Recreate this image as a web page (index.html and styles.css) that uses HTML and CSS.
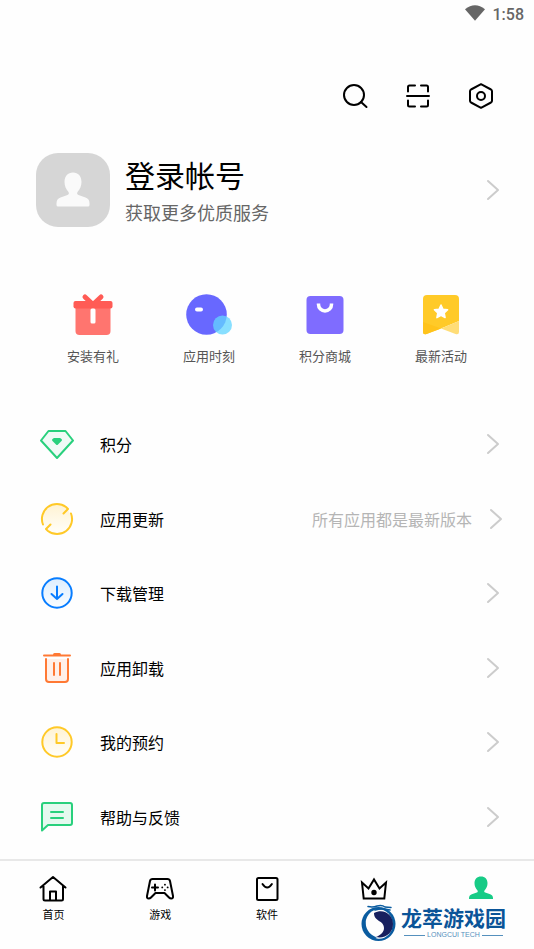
FILE: index.html
```html
<!DOCTYPE html>
<html lang="zh-CN">
<head>
<meta charset="utf-8">
<meta name="viewport" content="width=device-width, initial-scale=1">
<title>我的</title>
<link rel="stylesheet" href="styles.css">
</head>
<body>
<header class="status">
  <svg width="20" height="16" viewBox="0 0 20 16"><path d="M0 4.2Q10-3.8 20 4.2L10 15.8Z" fill="#666"/></svg>
  <time>1:58</time>
</header>
<div class="actions">
  <button type="button" aria-label="搜索"><svg class="line" width="26" height="26" viewBox="0 0 26 26"><circle cx="12" cy="12" r="10"/><path d="M19 19l5.500 5"/></svg></button>
  <button type="button" aria-label="扫一扫"><svg class="line" width="26" height="26" viewBox="0 0 26 26"><path d="M2 13h22M3 8.500V4q0-1.500 1.500-1.500H10M16 2.500h5.500Q23 2.500 23 4v4.500M3 17.500V22q0 1.500 1.500 1.500H10M16 23.500h5.500q1.500 0 1.500-1.500v-4.500"/></svg></button>
  <button type="button" aria-label="设置"><svg class="line" width="26" height="26" viewBox="0 0 26 26"><path d="M13 1.200L23 6.500q1 .6 1 1.700v9.600q0 1.100-1 1.700L13 24.800 3 19.500q-1-.6-1-1.700V8.200q0-1.100 1-1.700Z"/><circle cx="13" cy="13" r="4"/></svg></button>
</div>
<main>
  <a class="profile" href="#login">
    <span class="avatar"><svg width="34" height="36" viewBox="0 0 34 36"><path class="person" d="M17 .5c5.200 0 8.500 3.800 8.500 9.500 0 4-1.500 7-4 10-.8 1.200-.3 2.500 1 3l7 2.500c3 1 4 3 4 6V33q0 1.500-1.500 1.500H2Q.5 34.500.5 33v-1.500c0-3 1-5 4-6l7-2.500c1.300-.5 1.800-1.800 1-3-2.500-3-4-6-4-10C8.500 4.300 11.800.5 17 .5Z"/></svg></span>
    <span class="who"><strong>登录帐号</strong><small>获取更多优质服务</small></span>
    <svg class="arrow" width="14" height="22" viewBox="0 0 14 22"><path d="M2 2l10 9-10 9"/></svg>
  </a>
  <nav class="shortcuts" aria-label="快捷入口">
    <a href="#gift"><svg width="48" height="44" viewBox="0 0 48 44"><path fill="#ff756f" d="M6.500 15h35v23q0 4-4 4h-27q-4 0-4-4Z"/><path stroke="#ff5b55" stroke-width="5" stroke-linecap="round" stroke-linejoin="round" fill="none" d="M16 4l8 7.500 8-7.500"/><rect x="4.500" y="8" width="39" height="7.500" rx="2" fill="#ff5b55"/><rect x="21.500" y="15.500" width="5" height="15" rx="1.500" fill="#fff"/></svg>安装有礼</a>
    <a href="#moment"><svg width="48" height="44" viewBox="0 0 48 44"><circle cx="21.500" cy="21.500" r="20.300" fill="#6868ff"/><circle cx="37.500" cy="32" r="9.500" fill="#62d5ff" opacity=".76"/><rect x="10" y="14.500" width="8" height="4" rx="2" fill="#fff"/></svg>应用时刻</a>
    <a href="#mall"><svg width="48" height="44" viewBox="0 0 48 44"><rect x="5.500" y="3" width="37" height="38" rx="4" fill="#7f6cff"/><path d="M17.500 10.500v1a6.500 6.500 0 0 0 13 0v-1" fill="none" stroke="#fff" stroke-width="3.500"/></svg>积分商城</a>
    <a href="#events"><svg width="48" height="44" viewBox="0 0 48 44"><path fill="#ffca28" d="M6 6q0-4 4-4h28q4 0 4 4v22L24 35.500 9.500 41Q6 42 6 39Z"/><path fill="#ffc31b" d="M6 29l18 6.500L9.500 41Q6 42 6 39Z"/><path fill="#ffdd77" d="M24 35.500L42 28v11q0 3-3.500 2Z"/><path fill="#fff" stroke="#fff" stroke-width="1.500" stroke-linejoin="round" d="M24 12l2 4.200 4.600.6-3.400 3.200.9 4.600-4.100-2.200-4.100 2.200.9-4.600-3.400-3.200 4.600-.6Z"/></svg>最新活动</a>
  </nav>
  <ul class="menu">
    <li><a href="#points"><svg class="icon green" width="34" height="34" viewBox="0 0 34 34"><path fill="#f0faf6" d="M8.500 4h17L33 13.500 17 31 1 13.500Z"/><path fill="#29d07d" stroke="none" d="M14 11h6q3 1.500 1.500 3L18 17.500q-1 1-2 0L12.500 14q-1.500-1.500 1.500-3Z"/></svg><span>积分</span><svg class="arrow" width="14" height="22" viewBox="0 0 14 22"><path d="M2 2l10 9-10 9"/></svg></a></li>
    <li><a class="noted" href="#updates"><svg class="icon yellow" width="34" height="34" viewBox="0 0 34 34"><circle cx="17" cy="17" r="14" fill="url(#sun)" stroke="none"/><path d="M3 22.500A15 15 0 0 1 26 5l2 2-4.500 4.500M31 11.500A15 15 0 0 1 8 29l-2-2 4.500-4.500"/></svg><span>应用更新</span><small>所有应用都是最新版本</small><svg class="arrow" width="14" height="22" viewBox="0 0 14 22"><path d="M2 2l10 9-10 9"/></svg></a></li>
    <li><a href="#downloads"><svg class="icon blue" width="34" height="34" viewBox="0 0 34 34"><circle cx="17" cy="17" r="14.700" fill="url(#sky)"/><path d="M17 10.500v12.500M11.500 18l5.500 5 5.500-5"/></svg><span>下载管理</span><svg class="arrow" width="14" height="22" viewBox="0 0 14 22"><path d="M2 2l10 9-10 9"/></svg></a></li>
    <li><a href="#uninstall"><svg class="icon orange" width="34" height="34" viewBox="0 0 34 34"><path fill="#fff0e9" d="M6 8v20q0 3 3 3h16q3 0 3-3V8"/><path d="M4 4.500h26M14 12v12M20 12v12"/><path stroke-width="3" d="M14.500 3.500h5"/></svg><span>应用卸载</span><svg class="arrow" width="14" height="22" viewBox="0 0 14 22"><path d="M2 2l10 9-10 9"/></svg></a></li>
    <li><a href="#booking"><svg class="icon yellow" width="34" height="34" viewBox="0 0 34 34"><circle cx="17" cy="17" r="14.700" fill="url(#sun)"/><path d="M16.500 9v9H24"/></svg><span>我的预约</span><svg class="arrow" width="14" height="22" viewBox="0 0 14 22"><path d="M2 2l10 9-10 9"/></svg></a></li>
    <li><a href="#help"><svg class="icon green" width="34" height="34" viewBox="0 0 34 34"><path fill="#e5f9ef" d="M2 5q0-2 2-2h26q2 0 2 2v18q0 2-2 2H8l-6 5.500Z"/><path d="M11 12h12M11 18h12"/></svg><span>帮助与反馈</span><svg class="arrow" width="14" height="22" viewBox="0 0 14 22"><path d="M2 2l10 9-10 9"/></svg></a></li>
  </ul>
</main>
<footer>
  <nav class="tabs" aria-label="主导航">
    <a href="#home"><svg class="line" width="30" height="28" viewBox="0 0 30 28"><path d="M2.500 12.500L15 2l12.500 10.500M5.500 11v13q0 1.500 1.500 1.500h16.500q1.500 0 1.500-1.500V11M12 25v-8.500h6V25"/></svg>首页</a>
    <a href="#games"><svg class="line" width="30" height="28" viewBox="0 0 30 28"><path d="M5 6q.5-2 2.500-2h15q2 0 2.500 2l3 15q.3 2.500-1.700 2.500-1.300 0-2.300-1l-4.500-4.500h-9L6 22.500q-1 1-2.300 1-2 0-1.700-2.500ZM10 9.500v6M7 12.500h6"/><path stroke-width="1.800" d="M19.900 9.700h.1M19.900 15.100h.1M17.200 12.400h.1M22.600 12.400h.1"/></svg>游戏</a>
    <a href="#apps"><svg class="line" width="30" height="28" viewBox="0 0 30 28"><rect x="5" y="3" width="20.500" height="22" rx="1.500"/><path d="M10.500 9q4.700 7 9.400 0"/></svg>软件</a>
    <a href="#vip" aria-label="会员"><svg class="line crown" width="30" height="28" viewBox="0 0 30 28"><path d="M4.700 23.500L3 7.500l6.500 6L15 4.500l5.500 9 6.500-6-1.700 16Z"/><circle cx="15" cy="17.500" r="1.700" fill="#000"/></svg></a>
    <a href="#me" aria-label="我的" aria-current="page"><svg width="30" height="28" viewBox="0 0 30 28"><path fill="#17cb86" d="M15 1.500c4 0 6.500 2.700 6.500 6.500 0 3-1 5.300-3 7.500-.6 1-.2 1.800.7 2.100l5 1.700c2 .7 2.800 2 2.800 4V24H3v-.7c0-2 .8-3.300 2.800-4l5-1.700c.9-.3 1.300-1.100.7-2.100-2-2.200-3-4.500-3-7.500C8.500 4.200 11 1.500 15 1.500Z"/></svg></a>
  </nav>
  <div class="brand">
    <svg width="36" height="38" viewBox="0 0 36 38"><circle cx="17.500" cy="20" r="17" fill="#0a5ca0"/><path fill="#fefefe" d="M16 5C9 7 4 13 4.500 21 5 28 10 33 16 34.500c8 1.500 15.500-5 15.500-14C31.500 11 25 5 16 5Z"/><path fill="#17205f" d="M13 9C23 4 32 11 32 20c0 9-8 15-17 13 5-2 8-5 8-9 0-8-10-6-10-15Z"/><path fill="#0a5ca0" d="M4.500 16C4 24 8 31 16 33.500l-4 1C5 31 2 24 4.500 16Z"/><path fill="none" stroke="#0a5ca0" stroke-width="1.500" stroke-linecap="round" d="M7 2.500q5 1 9-.5 5-1.500 8 1l6 .5M14 6q7-2 15 0"/></svg>
    <p><b>龙萃游戏园</b><span>LONGCUI TECH</span></p>
  </div>
</footer>
<svg class="defs" width="0" height="0"><defs>
  <linearGradient id="sun" x2="0" y2="1"><stop stop-color="#fff3d3"/><stop offset="1" stop-color="#fffefa"/></linearGradient>
  <linearGradient id="sky" x2="0" y2="1"><stop stop-color="#deeeff"/><stop offset="1" stop-color="#fafdff"/></linearGradient>
</defs></svg>
</body>
</html>
```
FILE: styles.css
```css
* { box-sizing: border-box; }
body {
  margin: 0;
  min-height: 100vh;
  display: flex;
  flex-direction: column;
  background: #fefefe;
  color: #000;
  font-family: Roboto, "Noto Sans CJK SC", sans-serif;
  font-size: 16px;
}
a { color: inherit; text-decoration: none; }
svg { flex: none; display: block; }
.status {
  display: flex;
  justify-content: flex-end;
  align-items: center;
  gap: 8px;
  height: 28px;
  padding: 0 10px;
  color: #666;
  font-weight: 500;
}
.status svg { margin-bottom: 2px; }
.actions {
  display: flex;
  justify-content: flex-end;
  gap: 37px;
  margin-top: 55px;
  padding-right: 40px;
}
.actions button { padding: 0; border: 0; background: none; color: inherit; }
.line { fill: none; stroke: #000; stroke-width: 2; stroke-linecap: round; stroke-linejoin: round; }
.crown { stroke-linejoin: miter; }
main { flex: 1; display: flex; flex-direction: column; }
.profile {
  display: flex;
  align-items: center;
  margin-top: 44px;
  padding: 0 34px 0 36px;
}
.avatar {
  display: grid;
  place-items: center;
  width: 74px;
  height: 74px;
  border-radius: 22px;
  background: #d6d6d6;
}
.person { fill: #fafafa; }
.who {
  flex: 1;
  display: flex;
  flex-direction: column;
  gap: 4px;
  margin-left: 15px;
  padding-top: 4px;
}
.who strong { font-size: 30px; line-height: 40px; font-weight: 400; }
.who small { font-size: 18px; line-height: 26px; color: #666; }
.arrow { fill: none; stroke: #ccc; stroke-width: 2; stroke-linecap: round; stroke-linejoin: round; }
.shortcuts {
  display: grid;
  grid-template-columns: repeat(4, 1fr);
  margin-top: 66px;
  padding: 0 35px;
}
.shortcuts a {
  display: flex;
  flex-direction: column;
  align-items: center;
  gap: 10px;
  font-size: 13px;
  line-height: 20px;
  color: #555;
}
.menu {
  flex: 1;
  display: flex;
  flex-direction: column;
  margin: 40px 0 5px;
  padding: 0 34px 0 40px;
  list-style: none;
}
.menu li { flex: 1; display: flex; min-height: 50px; }
.menu a { flex: 1; display: flex; align-items: center; }
.menu span { flex: 1; margin-left: 26px; }
.menu small { margin-right: 17px; font-size: 16px; color: #b5b5b5; }
.menu .noted { margin-right: -3px; }
.icon { fill: none; stroke-width: 2; stroke-linecap: round; stroke-linejoin: round; }
.green { stroke: #29d07d; }
.yellow { stroke: #ffc928; }
.blue { stroke: #087dff; }
.orange { stroke: #ff7934; }
footer { position: relative; height: 90px; border-top: 2px solid #e8e8e8; }
.tabs { display: grid; grid-template-columns: repeat(5, 1fr); padding-top: 14px; }
.tabs a {
  display: flex;
  flex-direction: column;
  align-items: center;
  gap: 5px;
  font-size: 11px;
  line-height: 16px;
}
.brand {
  position: absolute;
  right: 28px;
  bottom: 7px;
  display: flex;
  align-items: center;
  gap: 4px;
  color: #0a5498;
}
.brand p { display: flex; flex-direction: column; margin: 0; }
.brand b { font-size: 21px; line-height: 24px; }
.brand span {
  display: flex;
  align-items: center;
  gap: 2px;
  margin: 0 3px;
  font: 7px/8px "Liberation Sans", sans-serif;
  color: #5590bd;
}
.brand span::before, .brand span::after { content: ""; flex: 1; height: 1px; background: #5590bd; }
.defs { position: absolute; }
```
